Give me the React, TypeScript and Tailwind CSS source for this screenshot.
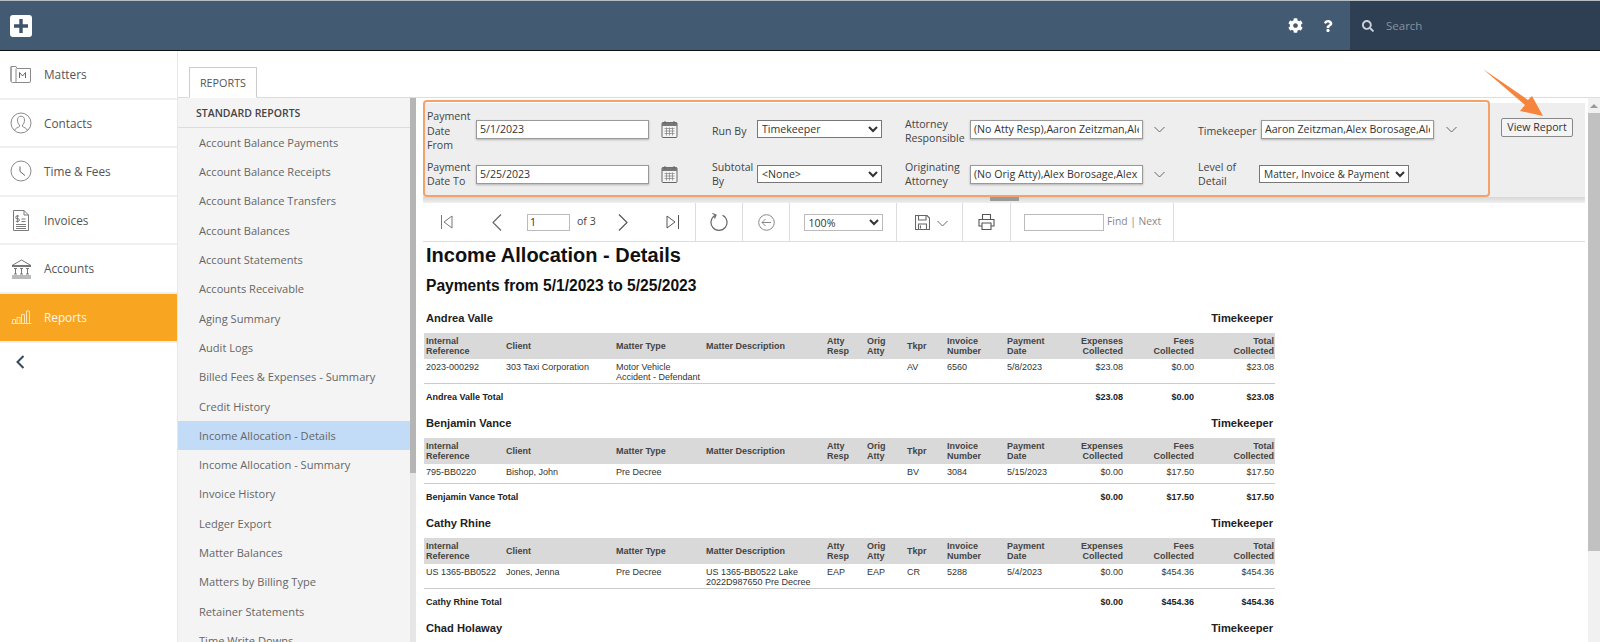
import { ReactNode } from "react";
import { FaCog, FaQuestion, FaSearch } from "react-icons/fa";

const reports = [
  "Account Balance Payments",
  "Account Balance Receipts",
  "Account Balance Transfers",
  "Account Balances",
  "Account Statements",
  "Accounts Receivable",
  "Aging Summary",
  "Audit Logs",
  "Billed Fees & Expenses - Summary",
  "Credit History",
  "Income Allocation - Details",
  "Income Allocation - Summary",
  "Invoice History",
  "Ledger Export",
  "Matter Balances",
  "Matters by Billing Type",
  "Retainer Statements",
  "Time Write Downs",
];

function MattersIcon() {
  return (
    <svg width="22" height="20" viewBox="0 0 22 20" fill="none" stroke="#8a8a8a" strokeWidth="1">
      <path d="M1 17V2.500h5l1 2h13.500V17a1.500 1.500 0 0 1-1.500 1.500H4" />
      <path d="M1 3v14a1.500 1.500 0 0 0 1.500 1.500H5a1 1 0 0 0 1-1V4.500" />
      <path d="M9.500 14V8.500l3 3.500 3-3.500V14" stroke="#666" />
    </svg>
  );
}

function ContactsIcon() {
  return (
    <svg width="22" height="22" viewBox="0 0 22 22" fill="none" stroke="#8a8a8a" strokeWidth="1">
      <circle cx="11" cy="11" r="10" />
      <path d="M4.500 18.500c.5-2.500 4-3 5-4v-1.500c-1-.8-2-2.500-2-5 0-2.500 1.500-3.800 3.500-3.800s3.500 1.300 3.500 3.800c0 2.500-1 4.200-2 5v1.500c1 1 4.500 1.500 5 4" />
    </svg>
  );
}

function ClockIcon() {
  return (
    <svg width="22" height="22" viewBox="0 0 22 22" fill="none" stroke="#8a8a8a" strokeWidth="1">
      <circle cx="11" cy="11" r="10" />
      <path d="M10 6.500V11.500L15 15.500" stroke="#666" />
    </svg>
  );
}

function InvoiceIcon() {
  return (
    <svg width="16" height="21" viewBox="0 0 16 21" fill="none" stroke="#7a7a7a" strokeWidth="1">
      <path d="M.5.500H11L15.500 5V20.500H.5Z" />
      <path d="M11 .5V5h4.500" />
      <path d="M6 6H4a1 1 0 0 0 0 2.700h1a1 1 0 0 1 0 2.700H2.800M4.400 5v7.500M8.500 9h4M8.500 11.500h4" />
      <path d="M3 14.500h10M3 16.500h10M3 18.500h10" strokeWidth="1.200" />
    </svg>
  );
}

function AccountsIcon() {
  return (
    <svg width="21" height="20" viewBox="0 0 21 20" fill="none" stroke="#777" strokeWidth="1">
      <path d="M1 6.500 10.500 1 20 6.500ZM1 7.500h19" />
      <path d="M3 9.500h3M4.500 9.500v5.500M3 15h3M9 9.500h3M10.500 9.500v5.500M9 15h3M15 9.500h3M16.500 9.500v5.500M15 15h3" />
      <path d="M1 17h19M1 19h19" />
    </svg>
  );
}

function ReportsIcon() {
  return (
    <svg width="21" height="14" viewBox="0 0 21 14" fill="none" stroke="#fde3b0" strokeWidth="1">
      <path d="M.5 13.500h20" />
      <path d="M1.500 13V9.500h3V13M6 13V7.500h3V13M10.500 13V4.500h3V13M15.500 13V1h3V13" />
    </svg>
  );
}

const navItems: { label: string; icon: ReactNode; active?: boolean }[] = [
  { label: "Matters", icon: <MattersIcon /> },
  { label: "Contacts", icon: <ContactsIcon /> },
  { label: "Time & Fees", icon: <ClockIcon /> },
  { label: "Invoices", icon: <InvoiceIcon /> },
  { label: "Accounts", icon: <AccountsIcon /> },
  { label: "Reports", icon: <ReportsIcon />, active: true },
];

function CalendarIcon() {
  return (
    <svg width="17" height="17" viewBox="0 0 16 17" className="shrink-0">
      <rect x=".5" y="1.500" width="15" height="15" rx="1" fill="#f4f4f4" stroke="#666" />
      <rect x=".5" y="1.500" width="15" height="3.500" fill="#777" />
      <path d="M3.500 0v3M12.500 0v3" stroke="#666" />
      <path d="M3 7.500h10M3 10h10M3 12.500h10M5 6.500v8M8 6.500v8M11 6.500v8" stroke="#8a8a8a" strokeWidth=".8" />
    </svg>
  );
}

function SmallChevron() {
  return (
    <svg width="11" height="7" viewBox="0 0 11 7" fill="none" stroke="#666" strokeWidth="1" className="shrink-0">
      <path d="M.5 1 5.500 6l5-5" />
    </svg>
  );
}

function FieldLabel({ className, children }: { className: string; children: ReactNode }) {
  return <label className={`${className} shrink-0 text-[10.600px] leading-[14.500px] text-[#444]`}>{children}</label>;
}

const inputClass =
  "h-[19px] border border-[#999] bg-white px-[3px] text-[10.600px] text-[#333] shadow-[0_1px_2px_rgba(0,0,0,0.25)] outline-none";
const selectClass = "h-[18px] border border-[#777] bg-white text-[10.600px] text-[#333] outline-none";

function FilterPanel() {
  return (
    <div className="flex h-[94px] shrink-0 bg-[#eeeeee]">
      <div className="grid w-[1067px] grid-cols-[285px_193px_293px_1fr] grid-rows-[48px_46px] pl-[4px]">
        <div className="flex items-center pt-[4px]">
          <FieldLabel className="mt-[4px] w-[49px]">Payment Date From</FieldLabel>
          <input className={`${inputClass} w-[173px]`} defaultValue="5/1/2023" />
          <span className="ml-[12px]"><CalendarIcon /></span>
        </div>
        <div className="flex items-center pt-[4px]">
          <FieldLabel className="mt-[4px] w-[45px]">Run By</FieldLabel>
          <select className={`${selectClass} w-[125px]`} defaultValue="Timekeeper">
            <option>Timekeeper</option>
          </select>
        </div>
        <div className="flex items-center pt-[4px]">
          <FieldLabel className="mt-[4px] w-[65px]">Attorney Responsible</FieldLabel>
          <input className={`${inputClass} w-[173px]`} defaultValue="(No Atty Resp),Aaron Zeitzman,Alex Borosage" />
          <span className="ml-[11px]"><SmallChevron /></span>
        </div>
        <div className="flex items-center pt-[4px]">
          <FieldLabel className="mt-[4px] w-[63px]">Timekeeper</FieldLabel>
          <input className={`${inputClass} w-[173px]`} defaultValue="Aaron Zeitzman,Alex Borosage,Alex Borosage" />
          <span className="ml-[12px]"><SmallChevron /></span>
        </div>
        <div className="flex items-center">
          <FieldLabel className="w-[49px]">Payment Date To</FieldLabel>
          <input className={`${inputClass} w-[173px]`} defaultValue="5/25/2023" />
          <span className="ml-[12px]"><CalendarIcon /></span>
        </div>
        <div className="flex items-center">
          <FieldLabel className="w-[45px]">Subtotal By</FieldLabel>
          <select className={`${selectClass} w-[125px]`} defaultValue="<None>">
            <option>{"<None>"}</option>
          </select>
        </div>
        <div className="flex items-center">
          <FieldLabel className="w-[65px]">Originating Attorney</FieldLabel>
          <input className={`${inputClass} w-[173px]`} defaultValue="(No Orig Atty),Alex Borosage,Alex Borosage" />
          <span className="ml-[11px]"><SmallChevron /></span>
        </div>
        <div className="flex items-center">
          <FieldLabel className="w-[61px]">Level of Detail</FieldLabel>
          <select className="h-[18px] w-[150px] border border-[#777] bg-white text-[10.200px] text-[#333] outline-none" defaultValue="Matter, Invoice & Payment">
            <option>Matter, Invoice & Payment</option>
          </select>
        </div>
      </div>
      <div className="ml-[11px] pt-[10px]">
        <button className="h-[19px] w-[72px] rounded-[2px] border border-[#888] bg-[#f4f4f4] text-[10.600px] leading-none text-[#333]">
          View Report
        </button>
      </div>
    </div>
  );
}

function Toolbar() {
  return (
    <div className="flex h-[39px] shrink-0 border-b border-[#dddddd] text-[10.600px] text-[#666]">
      <div className="flex w-[273px] items-center border-r border-[#dddddd] pl-[18px]">
        <svg width="12" height="14" viewBox="0 0 12 14" fill="none" stroke="#777" strokeWidth="1">
          <path d="M.5 0v14M11 1 3 7l8 6Z" />
        </svg>
        <svg width="10" height="17" viewBox="0 0 10 17" fill="none" stroke="#666" strokeWidth="1.200" className="ml-[39px]">
          <path d="M9 .5 1 8.500l8 8" />
        </svg>
        <input className="ml-[25px] h-[17px] w-[43px] border border-[#bbbbbb] px-[2px] text-[10.600px] text-[#333] outline-none" defaultValue="1" />
        <span className="ml-[7px] text-[#444]">of 3</span>
        <svg width="10" height="17" viewBox="0 0 10 17" fill="none" stroke="#555" strokeWidth="1.200" className="ml-[22px]">
          <path d="m1 .5 8 8-8 8" />
        </svg>
        <svg width="13" height="14" viewBox="0 0 13 14" fill="none" stroke="#555" strokeWidth="1" className="ml-[38px]">
          <path d="M1 1l8 6-8 6ZM12.500 0v14" />
        </svg>
      </div>
      <div className="flex w-[47px] items-center justify-center border-r border-[#dddddd]">
        <svg width="18" height="20" viewBox="0 0 18 20" fill="none" stroke="#666" strokeWidth="1.200">
          <path d="M5.500 3.200a8 8 0 1 0 7 0" />
          <path d="M2.500 1.500 6 3 4.500 6.500" />
        </svg>
      </div>
      <div className="flex w-[47px] items-center justify-center border-r border-[#dddddd]">
        <svg width="17" height="17" viewBox="0 0 17 17" fill="none" stroke="#888" strokeWidth="1">
          <circle cx="8.500" cy="8.500" r="7.800" />
          <path d="M13 8.500H4M7.500 5 4 8.500 7.500 12" />
        </svg>
      </div>
      <div className="flex w-[107px] items-center justify-center border-r border-[#dddddd]">
        <select className="h-[17px] w-[79px] border border-[#bbbbbb] bg-white text-[10.600px] text-[#333] outline-none" defaultValue="100%">
          <option>100%</option>
        </select>
      </div>
      <div className="flex w-[66px] items-center border-r border-[#dddddd] pl-[18px]">
        <svg width="15" height="15" viewBox="0 0 15 15" fill="none" stroke="#666" strokeWidth="1.100">
          <path d="M.5.500h11.500l2.500 2.500v11.500H.5Z" />
          <path d="M3.500.5v4.500h7.500V.5M3.500 14.500V9h8v5.500" />
          <path d="M5.500 10.500v3" />
        </svg>
        <span className="ml-[7px] mt-[3px]"><SmallChevron /></span>
      </div>
      <div className="flex w-[48px] items-center justify-center border-r border-[#dddddd]">
        <svg width="17" height="16" viewBox="0 0 17 16" fill="none" stroke="#555" strokeWidth="1.100">
          <path d="M4.500 5V.5h8V5M4 12H1V5.500h15V12h-3" />
          <path d="M4 9h9v6.500H4Z" />
        </svg>
      </div>
      <div className="flex w-[163px] items-center border-r border-[#dddddd] pl-[13px]">
        <input className="h-[17px] w-[80px] border border-[#bbbbbb] outline-none" />
        <span className="ml-[3px] text-[10.300px] text-[#888]">Find | Next</span>
      </div>
    </div>
  );
}

type Row = {
  ref: string;
  client: string;
  type: string;
  desc?: string;
  resp?: string;
  orig?: string;
  tkpr: string;
  invoice: string;
  date: string;
  expenses: string;
  fees: string;
  total: string;
};

const columns = "grid grid-cols-[80px_110px_90px_121px_40px_40px_40px_60px_70px_46px_71px_81px] pl-[2px]";

function ReportGroup({ name, row }: { name: string; row?: Row }) {
  return (
    <div className="w-[851px] text-[9px] leading-[10px] text-[#222]">
      <div className="flex h-[31px] items-center justify-between pl-[2px] pr-[2px] text-[11.150px] font-bold text-[#222]">
        <span>{name}</span>
        <span>Timekeeper</span>
      </div>
      {row && (
        <>
          <div className={`${columns} h-[26px] items-center bg-[#d9d9d9] font-bold text-[#444]`}>
            <span>Internal<br />Reference</span>
            <span>Client</span>
            <span>Matter Type</span>
            <span>Matter Description</span>
            <span>Atty<br />Resp</span>
            <span>Orig<br />Atty</span>
            <span>Tkpr</span>
            <span>Invoice<br />Number</span>
            <span className="col-span-2 grid grid-cols-[70px_46px]">
              <span>Payment<br />Date</span>
              <span className="-ml-[30px] whitespace-nowrap text-right">Expenses<br />Collected</span>
            </span>
            <span className="text-right">Fees<br />Collected</span>
            <span className="pr-[1px] text-right">Total<br />Collected</span>
          </div>
          <div className={`${columns} min-h-[20px] border-b border-[#cccccc] pt-[3px] pb-[1px] text-[#333]`}>
            <span>{row.ref}</span>
            <span>{row.client}</span>
            <span>{row.type}</span>
            <span>{row.desc}</span>
            <span>{row.resp}</span>
            <span>{row.orig}</span>
            <span>{row.tkpr}</span>
            <span>{row.invoice}</span>
            <span>{row.date}</span>
            <span className="text-right">{row.expenses}</span>
            <span className="text-right">{row.fees}</span>
            <span className="pr-[1px] text-right">{row.total}</span>
          </div>
          <div className={`${columns} h-[23px] items-center pt-[2px] font-bold`}>
            <span className="col-span-9">{name} Total</span>
            <span className="text-right">{row.expenses}</span>
            <span className="text-right">{row.fees}</span>
            <span className="pr-[1px] text-right">{row.total}</span>
          </div>
        </>
      )}
    </div>
  );
}

export default function App() {
  return (
    <div className="relative flex h-screen w-full flex-col overflow-hidden bg-white font-['Open_Sans',sans-serif]">
      <header className="flex h-[51px] shrink-0 items-center border-t border-b border-t-[#b5bcc4] border-b-[#111] bg-[#435a73]">
        <div className="ml-[10px] flex h-[22px] w-[22px] items-center justify-center rounded-[3px] bg-white">
          <svg width="14" height="14" viewBox="0 0 14 14" fill="#3d5470">
            <path d="M5.300 0h3.400v5.300H14v3.400H8.700V14H5.300V8.700H0V5.300h5.300Z" />
          </svg>
        </div>
        <div className="ml-auto flex items-center text-white">
          <FaCog className="mr-[19px] text-[15px]" />
          <FaQuestion className="mr-[16px] text-[12px]" />
        </div>
        <div className="flex h-full w-[250px] items-center bg-[#2e3f53] pl-[12px]">
          <FaSearch className="text-[12px] text-[#c9d0d6]" />
          <span className="ml-[12px] text-[11.500px] text-[#87939f]">Search</span>
        </div>
      </header>
      <div className="flex min-h-0 flex-1">
        <aside className="w-[178px] shrink-0 border-r border-[#e8e8e8]">
          {navItems.map((item) => (
            <div
              key={item.label}
              className={`flex h-[48.600px] items-center border-b-2 border-[#efefef] ${item.active ? "border-b-0 bg-[#f8a522] text-[#fff7e6]" : "text-[#555]"}`}
            >
              <span className="flex w-[44px] justify-center pr-[2px]">{item.icon}</span>
              <span className="pt-[1px] text-[11.800px]">{item.label}</span>
            </div>
          ))}
          <div className="flex h-[38px] items-center pl-[16px]">
            <svg width="9" height="14" viewBox="0 0 9 14" fill="none" stroke="#34495e" strokeWidth="2">
              <path d="M7.500 1 1.500 7l6 6" />
            </svg>
          </div>
        </aside>
        <main className="flex min-w-0 flex-1 flex-col">
          <div className="flex h-[47px] shrink-0 items-end border-b border-[#dddddd] pl-[11px]">
            <div className="-mb-px flex h-[31px] w-[68px] items-center justify-center border border-b-white border-[#cccccc] bg-white pt-[1px] text-[10.800px] text-[#555]">
              REPORTS
            </div>
          </div>
          <div className="flex min-h-0 flex-1">
            <div className="w-[232px] shrink-0 overflow-hidden bg-[#f4f4f4]">
              <div className="flex h-[30px] items-center border-b border-[#dddddd] pl-[18px] pt-[2px] text-[10.500px] font-semibold text-[#444]">
                STANDARD REPORTS
              </div>
              {reports.map((r) => (
                <div
                  key={r}
                  className={`flex h-[29.300px] items-center pl-[21px] pt-[1px] text-[11.100px] text-[#666] ${r === "Income Allocation - Details" ? "bg-[#c2dcf7]" : ""}`}
                >
                  {r}
                </div>
              ))}
            </div>
            <div className="w-[6px] shrink-0 bg-[#e6e6e6]">
              <div className="h-[375px] bg-[#b5b5b5]" />
            </div>
            <div className="flex min-w-0 flex-1">
              <div className="min-w-0 flex-1 pl-[7px] pr-[3px] pt-[5px]">
                <FilterPanel />
                <div className="flex h-[6px] justify-center bg-gradient-to-b from-[#d6d6d6] to-[#f0f0f0]">
                  <div className="h-[4px] w-[29px] bg-[#9a9a9a]" />
                </div>
                <Toolbar />
                <div className="pl-[1px]">
                  <h1 className="pl-[2px] font-['Liberation_Sans',sans-serif] text-[20px] font-bold leading-[26px] text-[#111]">
                    Income Allocation - Details
                  </h1>
                  <h2 className="pl-[2px] pt-[7px] font-['Liberation_Sans',sans-serif] text-[15.600px] font-bold leading-[22px] text-[#111]">
                    Payments from 5/1/2023 to 5/25/2023
                  </h2>
                  <div className="mt-[5px] font-['Liberation_Sans',sans-serif]">
                    <ReportGroup
                      name="Andrea Valle"
                      row={{ ref: "2023-000292", client: "303 Taxi Corporation", type: "Motor Vehicle Accident - Defendant", tkpr: "AV", invoice: "6560", date: "5/8/2023", expenses: "$23.08", fees: "$0.00", total: "$23.08" }}
                    />
                    <ReportGroup
                      name="Benjamin Vance"
                      row={{ ref: "795-BB0220", client: "Bishop, John", type: "Pre Decree", tkpr: "BV", invoice: "3084", date: "5/15/2023", expenses: "$0.00", fees: "$17.50", total: "$17.50" }}
                    />
                    <ReportGroup
                      name="Cathy Rhine"
                      row={{ ref: "US 1365-BB0522", client: "Jones, Jenna", type: "Pre Decree", desc: "US 1365-BB0522 Lake 2022D987650 Pre Decree", resp: "EAP", orig: "EAP", tkpr: "CR", invoice: "5288", date: "5/4/2023", expenses: "$0.00", fees: "$454.36", total: "$454.36" }}
                    />
                    <ReportGroup name="Chad Holaway" />
                  </div>
                </div>
              </div>
              <div className="flex w-[12px] shrink-0 flex-col bg-[#f1f1f1]">
                <div className="flex h-[15px] items-center justify-center">
                  <div className="h-0 w-0 border-x-[4px] border-b-[4px] border-x-transparent border-b-[#9a9a9a]" />
                </div>
                <div className="h-[438px] bg-[#c1c1c1]" />
              </div>
            </div>
          </div>
        </main>
      </div>
      <div className="absolute left-[423px] top-[100px] h-[97px] w-[1067px] rounded-[4px] border-2 border-[#f5a26a]" />
      <svg className="absolute left-[1480px] top-[66px]" width="66" height="54" viewBox="1480 66 66 54">
        <path d="M1483 69 1528 100 1532 96 1543 116 1520 111 1525 105Z" fill="#f5843c" />
      </svg>
    </div>
  );
}
